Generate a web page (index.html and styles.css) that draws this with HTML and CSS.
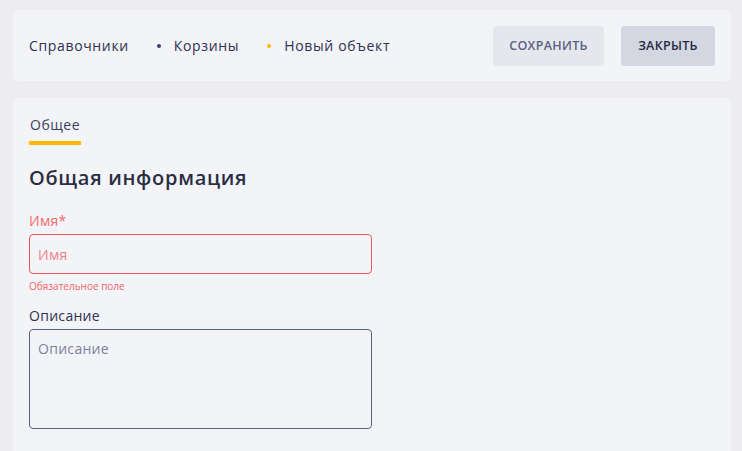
FILE: index.html
```html
<html>
	<head>
		<title>Новый объект</title>
		<link rel="stylesheet" href="styles.css">
	</head>
	<body>
		<div class="page">
			<div class="topbar">
				<div class="crumbs">
					<span class="crumb">Справочники</span>
					<span class="dot"></span>
					<span class="crumb">Корзины</span>
					<span class="dot dot-active"></span>
					<span class="crumb">Новый объект</span>
				</div>
				<div class="actions">
					<button class="btn btn-save">Сохранить</button>
					<button class="btn btn-close">Закрыть</button>
				</div>
			</div>

			<div class="card">
				<div class="tabs">
					<div class="tab tab-active">Общее</div>
				</div>
				<h2 class="section-title">Общая информация</h2>

				<div class="field field-error">
					<label class="field-label">Имя*</label>
					<input class="input" type="text" placeholder="Имя">
					<div class="field-hint">Обязательное поле</div>
				</div>

				<div class="field">
					<label class="field-label">Описание</label>
					<textarea class="input textarea" placeholder="Описание"></textarea>
				</div>
			</div>
		</div>
	</body>
</html>
```

FILE: styles.css
```css
body
{
	margin: 0;
	background-color: #ececf1;
	font-family: "Open Sans", "Liberation Sans", sans-serif;
	color: #2e3150;
}

.page
{
	padding: 10px 11px 0 13px;
	display: flex;
	flex-direction: column;
	gap: 17px;
}

.topbar
{
	display: flex;
	align-items: center;
	justify-content: space-between;
	height: 71px;
	padding: 0 16px 0 16px;
	background-color: #f3f4f8;
	border-radius: 5px;
}

.crumbs
{
	display: flex;
	align-items: center;
	font-size: 14px;
	letter-spacing: 0.65px;
	color: #2e3150;
}

.dot
{
	width: 4px;
	height: 4px;
	border-radius: 50%;
	background-color: #3b4270;
	margin: 0 13px 0 28px;
}

.dot-active
{
	background-color: #ffb800;
}

.actions
{
	display: flex;
	gap: 17px;
}

.btn
{
	height: 40px;
	border: 0;
	border-radius: 4px;
	font-family: inherit;
	font-size: 12.5px;
	font-weight: 600;
	text-transform: uppercase;
	letter-spacing: 0.3px;
	padding: 0 16px;
	cursor: pointer;
}

.btn-save
{
	width: 111px;
	background-color: #e6e7ed;
	color: #5b6185;
}

.btn-close
{
	width: 94px;
	background-color: #d4d7e1;
	color: #262a43;
}

.card
{
	background-color: #f3f4f8;
	border-radius: 5px 5px 0 0;
	padding: 17px 16px 22px 16px;
	min-height: 320px;
}

.tabs
{
	display: flex;
}

.tab
{
	font-size: 14px;
	letter-spacing: 0.5px;
	color: #3a3e5a;
	padding: 0 1px 7px 1px;
	border-bottom: 4px solid transparent;
}

.tab-active
{
	border-bottom-color: #ffb800;
}

.section-title
{
	margin: 19px 0 20px 0;
	font-size: 20px;
	font-weight: 600;
	letter-spacing: 0.7px;
	color: #2b2e42;
}

.field
{
	width: 343px;
	margin-bottom: 13px;
}

.field-label
{
	display: block;
	font-size: 14px;
	letter-spacing: 0.3px;
	margin-bottom: 4px;
	color: #2e3150;
}

.input
{
	display: block;
	box-sizing: border-box;
	width: 100%;
	height: 40px;
	padding: 0 8px;
	border: 1px solid #5a6287;
	border-radius: 4px;
	background-color: #f3f4f8;
	font-family: inherit;
	font-size: 14px;
	letter-spacing: 0.3px;
	color: #2e3150;
	outline: none;
}

.input::placeholder
{
	color: #7b819c;
}

.textarea
{
	height: 100px;
	padding: 9px 8px;
	resize: none;
}

.field-error .field-label
{
	color: #f26a6a;
}

.field-error .input
{
	border-color: #f05656;
}

.field-error .input::placeholder
{
	color: #f08585;
}

.field-hint
{
	font-size: 10px;
	color: #f06464;
	margin-top: 5px;
}
```
